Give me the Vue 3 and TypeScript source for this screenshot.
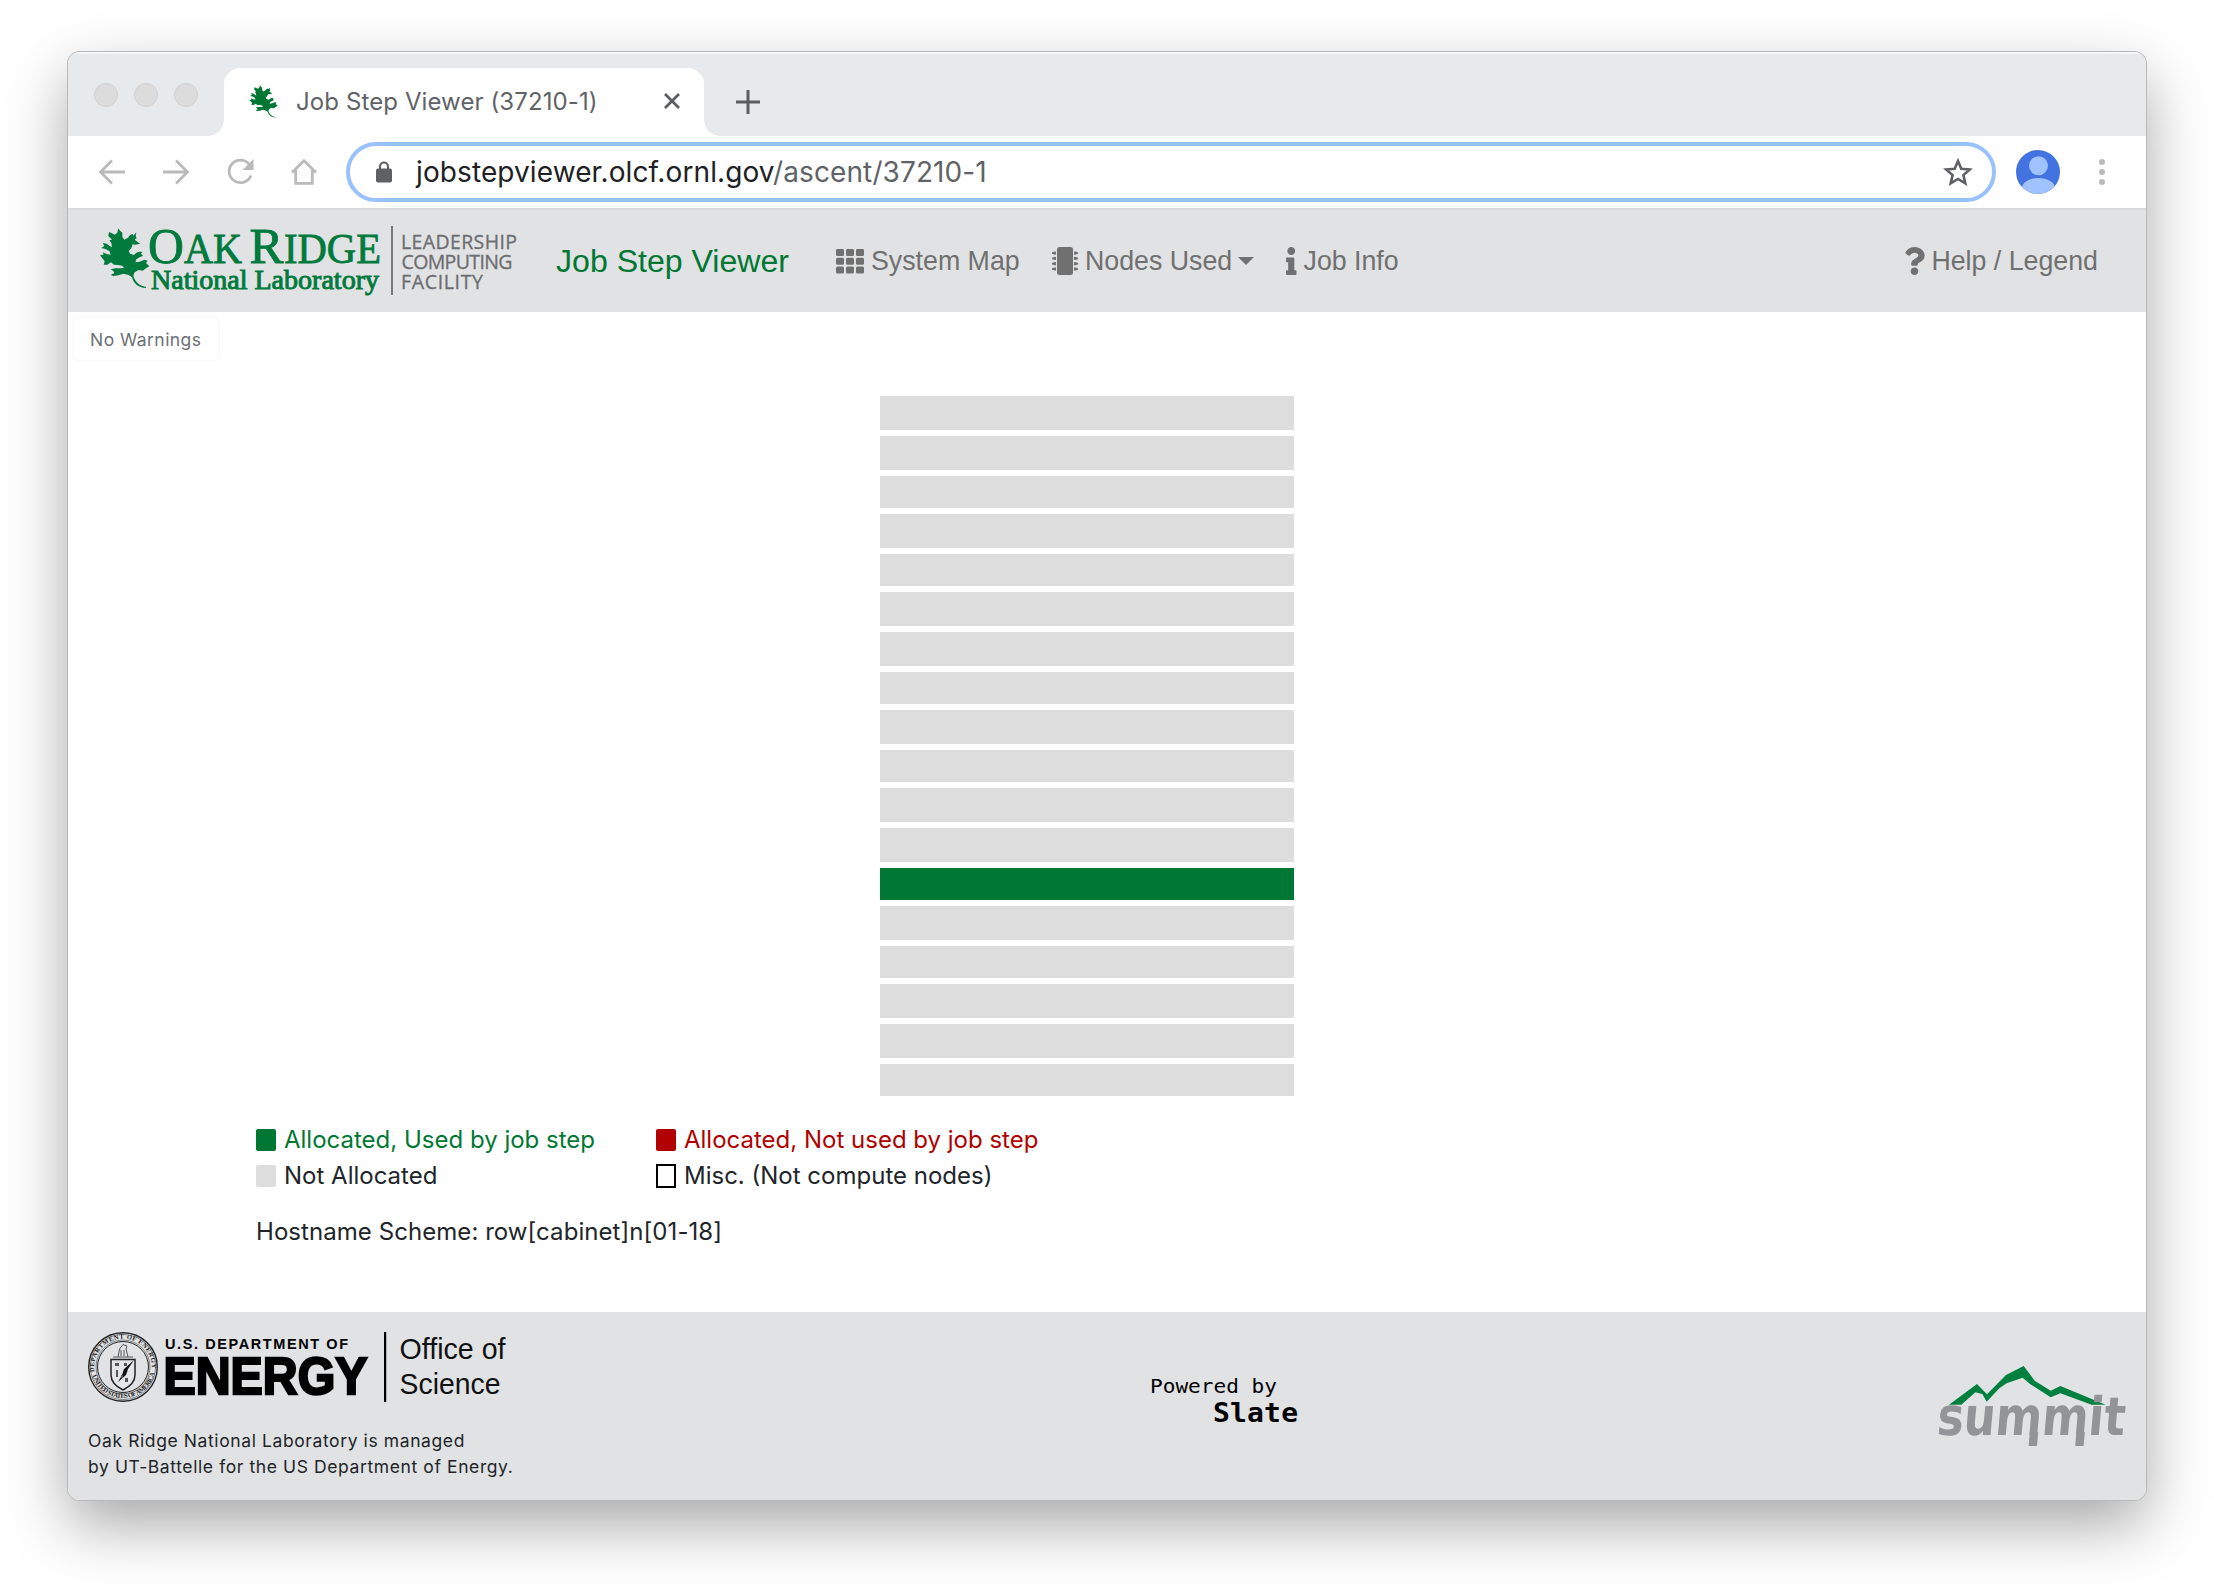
<script setup lang="ts">
interface NodeSlot { id: number; height: number; used: boolean }

const tallSlots = [1, 2, 4, 6, 7, 9, 11, 12, 14, 16, 17]
const slots: NodeSlot[] = Array.from({ length: 18 }, (_, i) => ({
  id: i + 1,
  height: tallSlots.includes(i + 1) ? 34 : 32,
  used: i + 1 === 13,
}))
const legend = [
  { kind: 'used', label: 'Allocated, Used by job step' },
  { kind: 'unused', label: 'Allocated, Not used by job step' },
  { kind: 'free', label: 'Not Allocated' },
  { kind: 'misc', label: 'Misc. (Not compute nodes)' },
]
const gridCells = Array.from({ length: 9 }, (_, i) => ({ x: (i % 3) * 10, y: Math.floor(i / 3) * 8.7 }))
const pins = Array.from({ length: 4 }, (_, i) => 4.6 + i * 5.3)
const leaf =
  'M85 40L90 47L97 53L97 66L103 74L114 68L120 60L128 57L130 62L139 52L137 64L140 69L134 74L150 86L136 89L128 88L124 100L116 108L120 116L132 120L139 113L148 110L157 111L153 116L159 122L149 127L139 133L136 142L149 140L163 134L173 137L168 144L178 154L168 160L158 167L146 165L134 172L130 181C133 197 146 213 168 216L168 219C144 219 130 204 126 187L116 180L101 176L85 181L70 183L62 180L73 174L70 168L62 163L76 160L91 160L103 158L96 152L84 150L72 149L63 142L52 149L41 149L44 139L30 121L41 119L38 112L50 117L62 119L58 108L46 102L34 99L43 93L38 84L50 86L59 93L66 96L64 84L58 76L66 74L55 63L57 51L66 55L74 59L82 53Z'
</script>

<template>
  <div class="desktop">
    <div class="window">
      <div class="tabs">
        <div class="lights"><i></i><i></i><i></i></div>
        <div class="tab">
          <svg class="favicon" viewBox="28 38 152 184" preserveAspectRatio="none"><path :d="leaf" /></svg>
          <span class="tab-title">Job Step Viewer (37210-1)</span>
          <svg class="close" viewBox="0 0 18 18"><path d="M2 2L16 16M16 2L2 16" /></svg>
        </div>
        <svg class="plus" viewBox="0 0 24 24"><path d="M12 0V24M0 12H24" /></svg>
      </div>

      <div class="toolbar">
        <div class="controls">
          <svg viewBox="0 0 28 28"><path d="M27 14H2.5M14 2.5L2.5 14L14 25.5" /></svg>
          <svg viewBox="0 0 28 28"><path d="M1 14H25.5M14 2.5L25.5 14L14 25.5" /></svg>
          <svg viewBox="0 0 28 28"><path d="M23.5 6.5A11.3 11.3 0 1 0 25 17.5" /><path class="solid" d="M27.5 1V12H16.5Z" /></svg>
          <svg viewBox="0 0 28 28"><path d="M2 14.5L14 2.8L26 14.5M5.7 12V25.3H22.3V12" /></svg>
        </div>
        <div class="omnibox">
          <svg class="lock" viewBox="0 0 16 22"><rect y="7.5" width="16" height="14" rx="2" /><path d="M4 9V5.5A4 4 0 0 1 12 5.5V9" /></svg>
          <span class="url">jobstepviewer.olcf.ornl.gov<em>/ascent/37210-1</em></span>
          <svg class="star" viewBox="0 0 30 28"><path d="M15 3L18.3 10.7L26.8 11.5L20.4 17.1L22.3 25.3L15 21L7.7 25.3L9.6 17.1L3.2 11.5L11.7 10.7Z" /></svg>
        </div>
        <svg class="avatar" viewBox="0 0 44 44">
          <defs><clipPath id="face"><circle cx="22" cy="22" r="22" /></clipPath></defs>
          <g clip-path="url(#face)"><rect width="44" height="44" fill="#4273e0" /><circle cx="22.5" cy="15.7" r="9.5" /><ellipse cx="22.5" cy="38" rx="16.5" ry="10" /></g>
        </svg>
        <svg class="menu" viewBox="0 0 6 26"><circle cx="3" cy="3" r="3" /><circle cx="3" cy="13" r="3" /><circle cx="3" cy="23" r="3" /></svg>
      </div>

      <header class="navbar">
        <svg class="ornl" viewBox="0 0 430 80">
          <path :d="leaf" fill="#007a3d" transform="translate(-8 -4) scale(.33333)" />
          <g class="serif">
            <text x="50" y="44" font-size="51" textLength="36" lengthAdjust="spacingAndGlyphs">O</text>
            <text x="86" y="44" font-size="42" textLength="58" lengthAdjust="spacingAndGlyphs">AK</text>
            <text x="151.500" y="44" font-size="51" textLength="34" lengthAdjust="spacingAndGlyphs">R</text>
            <text x="186" y="44" font-size="42" textLength="97" lengthAdjust="spacingAndGlyphs">IDGE</text>
            <text x="53" y="70" font-size="26.500" class="semi" textLength="228" lengthAdjust="spacingAndGlyphs">National Laboratory</text>
          </g>
          <rect x="293" y="7" width="2" height="69" fill="#77787a" />
          <g class="olcf">
            <text x="303" y="30" textLength="116">LEADERSHIP</text>
            <text x="303.500" y="50" textLength="111">COMPUTING</text>
            <text x="303" y="70" textLength="82">FACILITY</text>
          </g>
        </svg>
        <a class="brand">Job Step Viewer</a>
        <a class="link map"><svg viewBox="0 0 28 24.400"><rect v-for="c in gridCells" :key="`${c.x}-${c.y}`" :x="c.x" :y="c.y" width="8" height="7" rx="1.500" /></svg>System Map</a>
        <a class="link nodes">
          <svg viewBox="0 0 26 28"><rect x="5" width="16" height="28" rx="2.500" /><template v-for="p in pins" :key="p"><rect x="0" :y="p + .6" width="4" height="1.800" /><rect x="1.500" :y="p" width="2.500" height="3" /><rect x="22" :y="p" width="2.500" height="3" /><rect x="22" :y="p + .6" width="4" height="1.800" /></template></svg>Nodes Used<i class="caret"></i>
        </a>
        <a class="link info">
          <svg viewBox="0 0 192 512"><path d="M20 424.229h20V279.771H20c-11.046 0-20-8.954-20-20V212c0-11.046 8.954-20 20-20h112c11.046 0 20 8.954 20 20v212.229h20c11.046 0 20 8.954 20 20V492c0 11.046-8.954 20-20 20H20c-11.046 0-20-8.954-20-20v-47.771c0-11.046 8.954-20 20-20zM96 0C56.235 0 24 32.235 24 72s32.235 72 72 72 72-32.235 72-72S135.764 0 96 0z" /></svg>Job Info
        </a>
        <a class="link help">
          <svg viewBox="0 0 384 512"><path d="M202.021 0C122.202 0 70.503 32.703 29.914 91.026c-7.363 10.580-5.093 25.086 5.178 32.874l43.138 32.709c10.373 7.865 25.132 6.026 33.253-4.148 25.049-31.381 43.630-49.449 82.757-49.449 30.764 0 68.816 19.799 68.816 49.631 0 22.552-18.617 34.134-48.993 51.164-35.423 19.860-82.299 44.576-82.299 106.405V320c0 13.255 10.745 24 24 24h72.471c13.255 0 24-10.745 24-24v-5.773c0-42.860 125.268-44.645 125.268-160.627C377.504 66.256 286.902 0 202.021 0zM192 373.459c-38.196 0-69.271 31.075-69.271 69.271 0 38.195 31.075 69.270 69.271 69.270s69.271-31.075 69.271-69.271-31.075-69.270-69.271-69.270z" /></svg>Help / Legend
        </a>
      </header>

      <main>
        <div class="warnings">No Warnings</div>
        <div class="cabinet">
          <div v-for="s in slots" :key="s.id" class="slot" :class="{ active: s.used }" :style="{ height: s.height + 'px' }"></div>
        </div>
        <div class="legend">
          <div v-for="l in legend" :key="l.kind" class="entry" :class="l.kind"><i></i><span>{{ l.label }}</span></div>
        </div>
        <div class="scheme">Hostname Scheme: row[cabinet]n[01-18]</div>
      </main>

      <footer>
        <div class="managed">
          <svg class="doe" viewBox="0 0 430 70">
            <defs>
              <path id="arcTop" d="M6.700 42A29 29 0 1 1 63.300 42" />
              <path id="arcBottom" d="M2.800 38A32.500 32.500 0 0 0 67.200 38" />
            </defs>
            <g fill="none" stroke="#222"><circle cx="35" cy="35" r="34.300" stroke-width="1.400" /><circle cx="35" cy="35" r="32.600" stroke-width=".5" /><circle cx="35" cy="35" r="25.500" stroke-width="1" /><circle cx="35" cy="35" r="27" stroke-width=".5" /></g>
            <g class="seal">
              <text><textPath href="#arcTop" startOffset="2" textLength="96">DEPARTMENT OF ENERGY</textPath></text>
              <text><textPath href="#arcBottom" startOffset="6" textLength="84">UNITED STATES OF AMERICA</textPath></text>
            </g>
            <path d="M23 27.500H47V43C47 50 41 55 35 58C29 55 23 50 23 43Z" fill="#e4e5e7" stroke="#222" stroke-width="1.500" />
            <path d="M46 28L36 37L34 43L30 50L38 43L40 37Z" fill="#111" />
            <path d="M27 31h4v3h-4zM36 31h3v3h-3zM28 38h2v7h-2zM37 46h3v4h-3zM33 43h2v3h-2z" fill="#555" />
            <path d="M30 25L31.500 17L35 12.500L39 14L38 17L40 25M25 25H45M33 18V24M36 18V24" fill="none" stroke="#555" stroke-width="1" />
            <g class="dept">
              <text x="77" y="17" font-size="14.500" textLength="183" lengthAdjust="spacing">U.S. DEPARTMENT OF</text>
              <text x="75.500" y="61.700" font-size="52" class="heavy" textLength="204" lengthAdjust="spacingAndGlyphs">ENERGY</text>
            </g>
            <rect x="296" width="2.200" height="70" />
            <g class="office">
              <text x="311.500" y="27" textLength="106" lengthAdjust="spacingAndGlyphs">Office of</text>
              <text x="311.500" y="61.700" textLength="101" lengthAdjust="spacingAndGlyphs">Science</text>
            </g>
          </svg>
          <p>Oak Ridge National Laboratory is managed<br />by UT-Battelle for the US Department of Energy.</p>
        </div>
        <svg class="slate" viewBox="0 0 160 60">
          <text transform="scale(1 .95)" x="0" y="22" font-size="20.500" textLength="127" lengthAdjust="spacingAndGlyphs">Powered by</text>
          <text transform="scale(1 .95)" x="63" y="53" font-size="28" font-weight="700" textLength="85">Slate</text>
        </svg>
        <svg class="summit" viewBox="0 0 200 90">
          <path transform="translate(-36 -.7) scale(.33333)" fill="#00803f" d="M147 124L231 62L261 93L318 35L371 8L404 52L452 82L481 68L617 124L575 124L481 90L452 102L390 62L368 43L320 60L298 75L260 115L247 92L226 87L184 124Z" />
          <g transform="translate(0 71) skewX(-5)">
            <text x="0" y="0" textLength="188" lengthAdjust="spacingAndGlyphs">summit</text>
            <rect x="93.600" y="-3" width="8.400" height="14" />
            <rect x="140.200" y="-3" width="8.400" height="14" />
          </g>
        </svg>
      </footer>
    </div>
  </div>
</template>

<style>
body { margin: 0; background: #fff; }
</style>

<style scoped>
* { box-sizing: border-box; }
svg { display: block; flex: none; overflow: visible; }
.desktop { width: 2214px; height: 1584px; padding: 52px 68px; overflow: hidden; background: #fff; font-family: Inter, "Liberation Sans", sans-serif; }
.window { width: 2078px; height: 1448px; border-radius: 12px; overflow: hidden; background: #fff; box-shadow: 0 0 0 1px #b9b9b9, 0 25px 62px rgba(0, 0, 0, .35); display: flex; flex-direction: column; }
.tabs { height: 84px; background: #e6eaed; border-top: 2px solid #f4f6f7; display: flex; padding-left: 26px; flex: none; }
.lights { display: flex; gap: 16px; padding-top: 29px; width: 130px; }
.lights i { width: 24px; height: 24px; border-radius: 50%; background: #dcdcdc; border: 1px solid #d0d0d0; }
.tab { position: relative; width: 480px; height: 68px; margin-top: 14px; padding-bottom: 2px; background: #fff; border-radius: 16px 16px 0 0; display: flex; align-items: center; padding-left: 25px; }
.tab::before, .tab::after { content: ""; position: absolute; bottom: 0; width: 16px; height: 16px; }
.tab::before { left: -16px; background: radial-gradient(circle at 0 0, transparent 15.500px, #fff 16px); }
.tab::after { right: -16px; background: radial-gradient(circle at 100% 0, transparent 15.500px, #fff 16px); }
.favicon { width: 29px; height: 33px; fill: #007833; }
.tab-title { margin-left: 18px; width: 300px; font-size: 24px; letter-spacing: .1px; color: #5f6368; white-space: nowrap; }
.close { width: 18px; height: 18px; margin-left: 67px; stroke: #5a5e63; stroke-width: 2.800; }
.plus { width: 24px; height: 24px; margin: 36px 0 0 32px; stroke: #5a5e63; stroke-width: 3; }
.toolbar { height: 74px; border-bottom: 2px solid #dadbdd; display: flex; align-items: center; flex: none; }
.controls { display: flex; gap: 36px; margin-left: 30px; width: 248px; }
.controls svg { width: 28px; height: 28px; fill: none; stroke: #bababa; stroke-width: 2.800; }
.controls .solid { fill: #bababa; stroke: none; }
.omnibox { width: 1650px; height: 60px; border: 4px solid #99c1fb; border-radius: 30px; display: flex; align-items: center; padding: 0 19px 0 26px; }
.lock { width: 16px; height: 22px; fill: #5f6063; }
.lock path { fill: none; stroke: #5f6063; stroke-width: 2.200; }
.url { flex: 1; margin-left: 24px; font-size: 28px; letter-spacing: .1px; color: #202124; }
.url em { font-style: normal; color: #5f6368; }
.star { width: 30px; height: 28px; fill: none; stroke: #5f6063; stroke-width: 2.600; }
.avatar { width: 44px; height: 44px; margin-left: 20px; fill: #a0c2ff; }
.menu { width: 6px; height: 26px; margin-left: 39px; fill: #bababa; }
.navbar { height: 102px; background: #e1e2e4; display: flex; align-items: center; flex: none; padding-right: 48px; font-family: "Liberation Sans", sans-serif; }
.ornl { width: 430px; height: 80px; margin: -4px 0 0 30px; }
.serif { font-family: "Liberation Serif", serif; fill: #007a3d; stroke: #007a3d; stroke-width: .8; }
.semi { stroke-width: .9; }
.olcf { font: 19.500px "Open Sans", sans-serif; fill: #6c6d70; stroke: #6c6d70; stroke-width: .3; }
.brand { margin-left: 28px; width: 280px; font-size: 32.100px; color: #007833; white-space: nowrap; }
.link { display: flex; align-items: center; font-size: 26.750px; color: #707070; fill: #707070; white-space: nowrap; }
.map svg { width: 28px; height: 24.400px; margin-right: 7px; }
.map { width: 216px; }
.nodes svg { width: 26px; height: 28px; margin-right: 7px; }
.nodes { width: 234px; }
.caret { border: 8px solid transparent; border-top-color: #707070; border-bottom: 0; margin-left: 6px; }
.info svg { width: 10.500px; height: 28px; margin-right: 7px; }
.help { margin-left: auto; }
.help svg { width: 21px; height: 28px; margin-right: 6px; }
main { height: 1000px; flex: none; display: flex; flex-direction: column; color: #212529; }
.warnings { width: 148px; height: 46px; margin: 4px 0 0 4px; border: 2px solid #fafafb; border-radius: 7px; font-size: 17.500px; line-height: 43px; padding-left: 16px; letter-spacing: .45px; color: #6c7075; white-space: nowrap; }
.cabinet { margin: 34px 0 0 812px; width: 414px; display: flex; flex-direction: column; gap: 6px; }
.slot { background: #ddd; flex: none; }
.slot.active { background: #007833; }
.legend { margin: 26px 0 0 188px; display: grid; grid-template-columns: 400px 500px; grid-auto-rows: 36px; font-size: 24px; }
.entry { display: flex; align-items: center; white-space: nowrap; }
.entry span { margin-top: -1px; }
.entry i { width: 20px; height: 22px; border-radius: 2px; margin-right: 8px; }
.used { color: #007833; }
.used i { background: #007833; }
.unused { color: #b00000; }
.unused i { background: #b00000; }
.free i { background: #ddd; }
.misc i { height: 24px; border: 2px solid #000; border-radius: 0; background: #fff; }
.scheme { margin: 20px 0 0 188px; font-size: 24px; line-height: 36px; letter-spacing: .06px; }
footer { flex: 1; background: #e1e2e4; display: flex; }
.managed { width: 1082px; padding: 20px 0 0 20px; }
.doe { width: 430px; height: 70px; }
.managed p { margin: 26px 0 0; font-size: 17.500px; line-height: 26px; letter-spacing: .6px; color: #212529; white-space: nowrap; }
.dept { font-family: "Liberation Sans", sans-serif; font-weight: 700; fill: #000; }
.heavy { stroke: #000; stroke-width: 2.400; }
.office { font: 29px "Liberation Sans", sans-serif; fill: #111; }
.seal { font: 700 6.600px "Liberation Serif", serif; fill: #222; }
.slate { width: 160px; height: 60px; margin-top: 60px; font-family: "DejaVu Sans Mono", monospace; fill: #000; }
.summit { width: 200px; height: 90px; margin: 52px 0 0 626px; font: 700 53px "DejaVu Sans", sans-serif; fill: #929497; }
</style>
